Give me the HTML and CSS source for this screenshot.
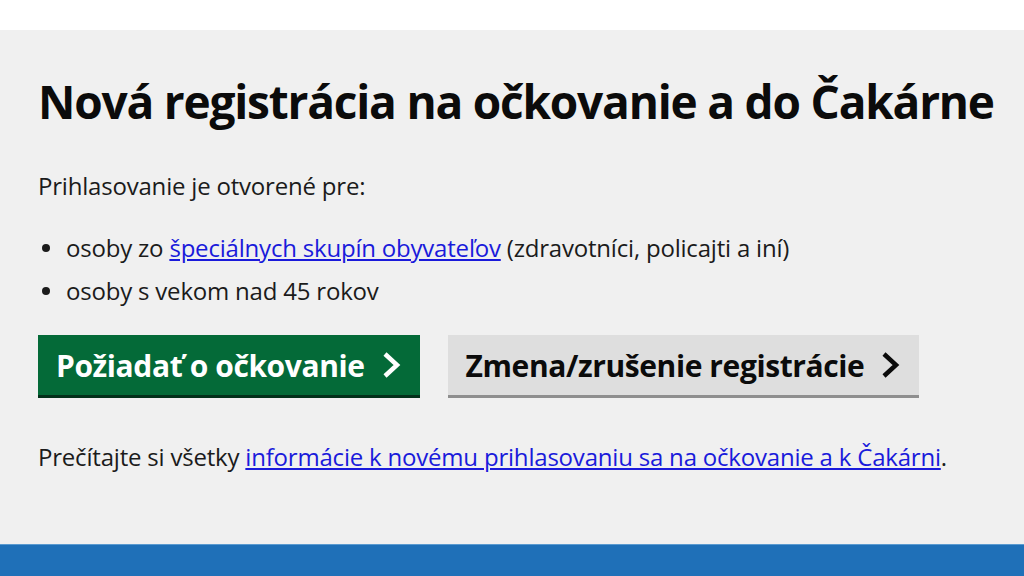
FILE: index.html
```html
<!DOCTYPE html>
<html lang="sk">
<head>
    <meta charset="UTF-8">
    <meta name="viewport" content="width=device-width, initial-scale=1.0">
    <title>Nová registrácia na očkovanie</title>
    <link rel="stylesheet" href="styles.css">
</head>
<body>
<div class="top-bar"></div>

<main class="panel">
    <h1 class="panel-title">Nová registrácia na očkovanie a do Čakárne</h1>

    <p class="panel-text">Prihlasovanie je otvorené pre:</p>

    <ul class="group-list">
        <li>osoby zo <a href="#">špeciálnych skupín obyvateľov</a> (zdravotníci, policajti a iní)</li>
        <li>osoby s vekom nad 45 rokov</li>
    </ul>

    <div class="button-row">
        <a href="#" class="btn btn-primary">Požiadať o očkovanie
            <svg class="btn-arrow" viewBox="0 0 22 28"><path d="M5 3l12 11-12 11"/></svg>
        </a>
        <a href="#" class="btn btn-secondary">Zmena/zrušenie registrácie
            <svg class="btn-arrow" viewBox="0 0 22 28"><path d="M5 3l12 11-12 11"/></svg>
        </a>
    </div>

    <p class="panel-text">Prečítajte si všetky <a href="#">informácie k novému prihlasovaniu sa na očkovanie a k Čakárni</a>.</p>
</main>

<div class="bottom-bar"></div>
</body>
</html>
```

FILE: styles.css
```css
* { margin: 0; padding: 0; box-sizing: border-box; }
body {
    font-family: 'Open Sans', 'Noto Sans', sans-serif;
    background: #f0f0f0;
    color: #1b1b1b;
    height: 576px;
    display: flex;
    flex-direction: column;
    overflow: hidden;
}
.top-bar { height: 30px; background: #fff; }
.bottom-bar { height: 32px; background: #1f70b8; border-top: 1px solid #5a9ad0; }

.panel {
    flex: 1;
    padding: 43px 38px 0;
}
.panel-title {
    font-size: 46px;
    font-weight: 700;
    letter-spacing: -1.2px;
    line-height: 56px;
    white-space: nowrap;
    color: #0b0b0b;
    margin-bottom: 42px;
}
.panel-text { font-size: 24px; line-height: 30px; letter-spacing: -0.2px; }
.panel-text a, .group-list a { color: #1a1adb; }

.group-list {
    list-style: none;
    margin: 25px 0 23px;
    font-size: 24px;
    line-height: 43px;
    letter-spacing: -0.2px;
}
.group-list li { position: relative; padding-left: 28px; }
.group-list li::before {
    content: "";
    position: absolute;
    left: 4px; top: 18px;
    width: 8px; height: 8px;
    border-radius: 50%;
    background: #1b1b1b;
}

.button-row { display: flex; gap: 28px; margin-bottom: 44px; }
.btn {
    display: flex;
    align-items: center;
    gap: 15px;
    height: 63px;
    padding: 0 18px;
    font-size: 30px;
    font-weight: 700;
    letter-spacing: -0.4px;
    text-decoration: none;
    border-bottom: 3px solid;
}
.btn-primary { background: #046a38; color: #fff; border-color: #02301a; }
.btn-secondary { background: #dedede; color: #0b0b0b; border-color: #8e8e8e; }
.btn-arrow {
    width: 22px; height: 28px;
    fill: none;
    stroke: currentColor;
    stroke-width: 4.5;
}
```
